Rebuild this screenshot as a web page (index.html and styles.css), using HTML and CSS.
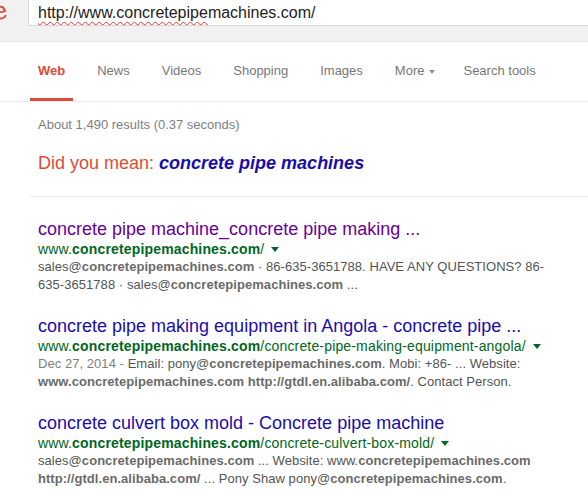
FILE: index.html
```html
<!DOCTYPE html>
<html>
<head>
<meta charset="utf-8">
<link rel="stylesheet" href="styles.css">
</head>
<body>
<header class="topbar">
  <div class="logo"><span class="logo-e">e</span></div>
  <div class="searchbox"><span class="misspelt">http://www.concretepipe</span>machines.com/</div>
</header>
<nav class="tabs">
  <a class="tab active">Web</a>
  <a class="tab">News</a>
  <a class="tab">Videos</a>
  <a class="tab">Shopping</a>
  <a class="tab">Images</a>
  <a class="tab more">More<span class="caret"></span></a>
  <a class="tab tools">Search tools</a>
</nav>
<main class="main">
  <div class="stats">About 1,490 results (0.37 seconds)</div>
  <div class="dym">Did you mean: <a class="dym-link">concrete pipe machines</a></div>
  <div class="results">
    <div class="result">
      <a class="title visited">concrete pipe machine_concrete pipe making ...</a>
      <div class="url">www.<b>concretepipemachines.com</b>/<span class="arrow"></span></div>
      <div class="snippet">sales@<b>concretepipemachines.com</b> · 86-635-3651788. HAVE ANY QUESTIONS? 86-<br>635-3651788 · sales@<b>concretepipemachines.com</b> ...</div>
    </div>
    <div class="result">
      <a class="title">concrete pipe making equipment in Angola - concrete pipe ...</a>
      <div class="url">www.<b>concretepipemachines.com</b>/concrete-pipe-making-equipment-angola/<span class="arrow"></span></div>
      <div class="snippet"><span class="date">Dec 27, 2014 - </span>Email: pony@<b>concretepipemachines.com</b>. Mobi: +86- ... Website:<br><b>www.concretepipemachines.com</b> <b>http://gtdl.en.alibaba.com/</b>. Contact Person.</div>
    </div>
    <div class="result">
      <a class="title">concrete culvert box mold - Concrete pipe machine</a>
      <div class="url">www.<b>concretepipemachines.com</b>/concrete-culvert-box-mold/<span class="arrow"></span></div>
      <div class="snippet">sales@<b>concretepipemachines.com</b> ... Website: www.<b>concretepipemachines.com</b><br><b>http://gtdl.en.alibaba.com/</b> ... Pony Shaw pony@<b>concretepipemachines.com</b>.</div>
    </div>
  </div>
</main>
</body>
</html>
```

FILE: styles.css
```css
html, body {
  margin: 0;
  padding: 0;
  background: #fff;
  font-family: "Liberation Sans", Arial, sans-serif;
  overflow: hidden;
}

.topbar {
  display: flex;
  align-items: flex-start;
  height: 41px;
  background: #f1f1f1;
  border-bottom: 1px solid #e5e5e5;
  overflow: hidden;
}

.logo {
  width: 9px;
  height: 26px;
  overflow: hidden;
  flex: none;
}

.logo-e {
  display: block;
  margin-left: -7px;
  margin-top: -3px;
  font-size: 25px;
  line-height: 26px;
  color: #dd4b39;
  transform: rotate(-12deg);
}

.searchbox {
  flex: 1;
  margin-left: 19px;
  height: 25px;
  background: #fff;
  border-left: 1px solid #d9d9d9;
  border-bottom: 1px solid #d9d9d9;
  padding-left: 9px;
  font-size: 16px;
  line-height: 25px;
  color: #222;
  white-space: nowrap;
}

.misspelt {
  text-decoration: underline wavy #e33;
  text-decoration-thickness: 1px;
  text-underline-offset: 3px;
}

.tabs {
  display: flex;
  height: 59px;
  padding-left: 30px;
  gap: 16px;
  border-bottom: 1px solid #ebebeb;
}

.tab {
  display: flex;
  align-items: flex-start;
  box-sizing: border-box;
  height: 59px;
  padding: 21px 8px 0;
  font-size: 13px;
  line-height: 16px;
  color: #777;
  border-bottom: 3px solid transparent;
}

.tab.active {
  color: #dd4b39;
  font-weight: bold;
  border-bottom-color: #dd4b39;
}

.tab.more {
  padding-right: 4px;
}

.caret {
  display: inline-block;
  margin: 7px 0 0 5px;
  border-style: solid;
  border-width: 4px 3.5px 0 3.5px;
  border-color: #909090 transparent transparent transparent;
}

.main {
  padding-left: 30px;
}

.stats {
  padding: 15px 0 0 8px;
  font-size: 13px;
  line-height: 16px;
  color: #808080;
}

.dym {
  padding: 19px 0 0 8px;
  font-size: 18px;
  line-height: 22px;
  color: #dd4b39;
}

.dym-link {
  color: #1a0dab;
  font-weight: bold;
  font-style: italic;
}

.results {
  margin-top: 22px;
  border-top: 1px solid #ebebeb;
  padding: 21px 0 0 8px;
}

.result {
  margin-bottom: 21px;
}

.title {
  display: block;
  font-size: 18px;
  line-height: 22px;
  color: #1a0dab;
  white-space: nowrap;
}

.title.visited {
  color: #609;
}

.url {
  font-size: 14px;
  line-height: 18px;
  letter-spacing: 0.16px;
  color: #006621;
  white-space: nowrap;
}

.url b {
  font-weight: bold;
}

.arrow {
  display: inline-block;
  vertical-align: middle;
  margin: -2px 0 0 7px;
  border-style: solid;
  border-width: 5px 4px 0 4px;
  border-color: #006621 transparent transparent transparent;
}

.snippet {
  font-size: 13px;
  line-height: 18px;
  letter-spacing: 0.05px;
  color: #545454;
  white-space: nowrap;
}

.snippet b {
  color: #6a6a6a;
}

.date {
  color: #808080;
}
```
